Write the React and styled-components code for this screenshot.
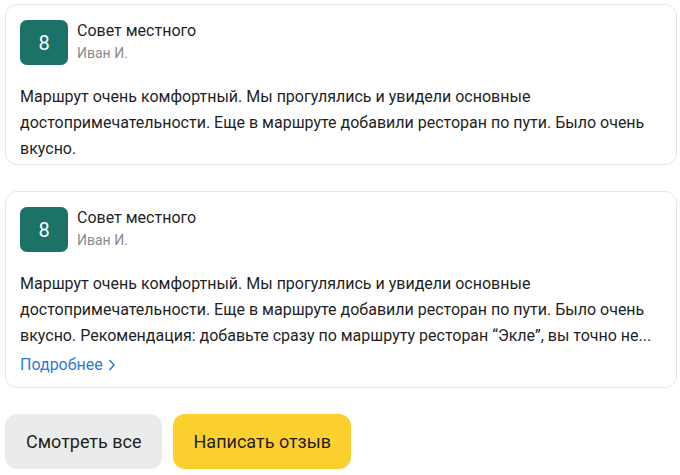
import React from "react";
import styled, { createGlobalStyle } from "styled-components";

const GlobalStyle = createGlobalStyle`
  body {
    margin: 0;
    background: #ffffff;
    font-family: "Roboto", "Noto Sans", sans-serif;
    color: #1f1f1f;
  }
`;

const Page = styled.div`
  padding: 4px 3px 0 5px;
  display: flex;
  flex-direction: column;
  gap: 26px;
`;

const Card = styled.div`
  border: 1px solid #e6e6e6;
  border-radius: 12px;
  padding: 15px 14px ${props => props.bottom || 10}px 14px;
`;

const Header = styled.div`
  display: flex;
  align-items: flex-start;
  gap: 9px;
`;

const Avatar = styled.div`
  width: 48px;
  height: 45px;
  border-radius: 7px;
  background: #1b7269;
  color: #ffffff;
  font-size: 20px;
  display: flex;
  align-items: center;
  justify-content: center;
`;

const Meta = styled.div`
  display: flex;
  flex-direction: column;
  gap: 3px;
  padding-top: 1px;
`;

const Title = styled.div`
  font-size: 16px;
  line-height: 20px;
  color: #1f1f1f;
`;

const Author = styled.div`
  font-size: 14px;
  line-height: 18px;
  color: #8a8a8a;
`;

const Text = styled.p`
  margin: 19px 0 0;
  font-size: 16px;
  line-height: 26px;
  color: #1f1f1f;
`;

const Line = styled.span`
  display: block;
  white-space: nowrap;
`;

const More = styled.a`
  display: inline-flex;
  align-items: center;
  gap: 5px;
  margin-top: 4px;
  font-size: 16px;
  line-height: 24px;
  color: #2b7bd6;
  text-decoration: none;
`;

const Actions = styled.div`
  display: flex;
  gap: 11px;
`;

const Button = styled.button`
  height: 55px;
  padding: 0 20px 0 21px;
  border: none;
  border-radius: 12px;
  font-family: inherit;
  font-size: 18px;
  color: #1f1f1f;
  background: ${props => (props.primary ? "#fcd02f" : "#ebebeb")};
`;

const Chevron = () => (
  <svg width="8" height="12" viewBox="0 0 8 12" fill="none">
    <path d="M2 1.5L6 6L2 10.5" stroke="#2b7bd6" strokeWidth="1.6" strokeLinecap="round" strokeLinejoin="round" />
  </svg>
);

const ReviewHeader = () => (
  <Header>
    <Avatar>8</Avatar>
    <Meta>
      <Title>Совет местного</Title>
      <Author>Иван И.</Author>
    </Meta>
  </Header>
);

export default function App() {
  return (
    <>
      <GlobalStyle />
      <Page>
        <Card bottom={2}>
          <ReviewHeader />
          <Text>
            Маршрут очень комфортный. Мы прогулялись и увидели основные
            достопримечательности. Еще в маршруте добавили ресторан по пути. Было очень
            вкусно.
          </Text>
        </Card>
        <Card bottom={10}>
          <ReviewHeader />
          <Text>
            <Line>Маршрут очень комфортный. Мы прогулялись и увидели основные</Line>
            <Line>достопримечательности. Еще в маршруте добавили ресторан по пути. Было очень</Line>
            <Line>вкусно. Рекомендация: добавьте сразу по маршруту ресторан “Экле”, вы точно не...</Line>
          </Text>
          <More href="#">
            Подробнее <Chevron />
          </More>
        </Card>
        <Actions>
          <Button>Смотреть все</Button>
          <Button primary>Написать отзыв</Button>
        </Actions>
      </Page>
    </>
  );
}
